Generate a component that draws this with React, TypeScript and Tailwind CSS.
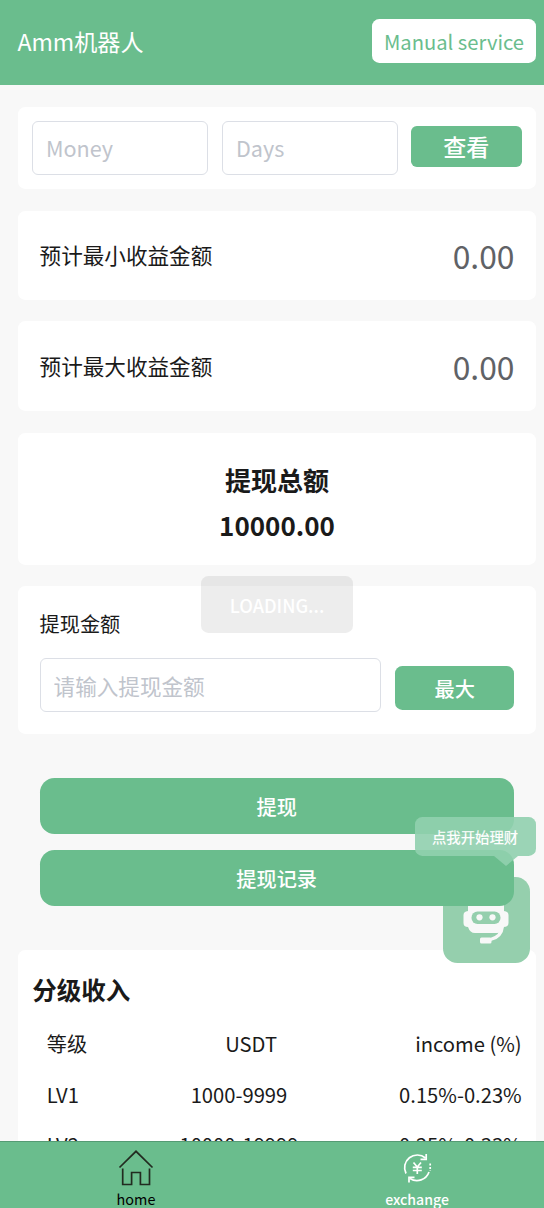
import React from 'react';

const levels = [
  { level: 'LV1', range: '1000-9999', income: '0.15%-0.23%' },
  { level: 'LV2', range: '10000-19999', income: '0.25%-0.33%' },
];

const estimates = [
  { label: '预计最小收益金额', value: '0.00' },
  { label: '预计最大收益金额', value: '0.00' },
];

function RobotIcon() {
  return (
    <svg width="86" height="86" viewBox="0 0 86 86" fill="none">
      <path d="M25 34V29Q25 22 32 22H54Q61 22 61 29V34Q65.500 34.500 65.500 38V46Q65.500 50 60.500 50Q59 56 54 56H32Q27 56 25 50Q20.500 50 20.500 46V38Q20.500 34.500 25 34Z" fill="#f8f8f8" />
      <rect x="28.500" y="34.500" width="29" height="12.500" rx="6" fill="#95cfad" />
      <circle cx="36.500" cy="40.300" r="3.100" fill="#f8f8f8" />
      <circle cx="49.500" cy="40.300" r="3.100" fill="#f8f8f8" />
      <path d="M59.500 49Q58.500 60 47.500 62.500" stroke="#f8f8f8" strokeWidth="3.200" />
      <rect x="37" y="60.500" width="11.500" height="6" rx="1.500" fill="#f8f8f8" />
    </svg>
  );
}

function HomeIcon() {
  return (
    <svg className="shrink-0" width="36" height="36" viewBox="0 0 36 36" fill="none" stroke="#222b20" strokeWidth="1.700">
      <path d="M1.500 17.500L18 1.300L34.500 17.500" />
      <path d="M4.700 18.500V34.500H13.600V22.500H22.400V34.500H31.500V18.500" />
    </svg>
  );
}

function ExchangeIcon() {
  return (
    <svg className="shrink-0" width="30" height="30" viewBox="0 0 30 30" fill="none" stroke="#fff" strokeWidth="1.700">
      <path d="M4 20.500A12.700 12.700 0 0 1 23.500 5" />
      <path d="M24.200 1V6.300H18.500" />
      <path d="M27 19A12.700 12.700 0 0 1 8 25.500" />
      <path d="M7 29.500V24.300H12.500" />
      <path d="M28.200 10.500V18" strokeDasharray="2 1.500" />
      <path d="M11.500 9.500L15.300 14L19 9.500M15.300 14V21M10.800 14.300H19.800M10.800 17.500H19.800" />
    </svg>
  );
}

export default function App() {
  return (
    <div className="relative flex h-[1208px] w-[544px] flex-col overflow-hidden bg-[#f8f8f8] font-['Noto_Sans_CJK_SC',sans-serif] text-[#1a1a1a]">
      <header className="flex h-[85.3px] shrink-0 items-center justify-between bg-[#6abd8d] pl-[17.4px] pr-[7.8px]">
        <h1 className="mb-[2px] text-[23.100px] text-white">Amm机器人</h1>
        <button className="mb-[3px] h-[44.300px] w-[164.500px] rounded-[7.300px] bg-white pt-[2px] text-[20.200px] text-[#6abd8d]">Manual service</button>
      </header>

      <main className="flex flex-col pt-[21.400px] pl-[17.800px] pr-[7.800px]">
        <section className="flex h-[82.500px] items-start rounded-[7.300px] bg-white pl-[14.700px] pt-[14.500px]">
          <input placeholder="Money" className="h-[53.500px] w-[176px] rounded-[6px] border border-[#dcdfe6] bg-white px-[12.500px] text-[21.600px] placeholder:text-[#c0c4cc]" />
          <input placeholder="Days" className="ml-[14px] h-[53.500px] w-[176px] rounded-[6px] border border-[#dcdfe6] bg-white px-[12.500px] text-[21.600px] placeholder:text-[#c0c4cc]" />
          <button className="ml-[12.500px] mt-[5px] h-[40.600px] w-[111.500px] rounded-[5.800px] bg-[#6abd8d] pr-[1px] text-[23.100px] font-medium text-white">查看</button>
        </section>

        {estimates.map(item => (
          <section key={item.label} className="mt-[21.500px] flex h-[89.300px] items-center justify-between rounded-[7.300px] bg-white px-[21.760px]">
            <span className="text-[21.600px]">{item.label}</span>
            <span className="pt-[2px] text-[31.800px] text-[#606266]">{item.value}</span>
          </section>
        ))}

        <section className="mt-[21.760px] flex h-[132.300px] flex-col items-center rounded-[7.300px] bg-white pt-[24.200px] font-bold">
          <h2 className="text-[26px] leading-[45px]">提现总额</h2>
          <p className="text-[26px] leading-[45px]">10000.00</p>
        </section>

        <section className="mt-[21.500px] h-[147.500px] rounded-[7.300px] bg-white px-[21.760px] pt-[22px]">
          <p className="text-[20.200px] leading-[31px]">提现金额</p>
          <div className="mt-[19px] flex items-center">
            <input placeholder="请输入提现金额" className="h-[54px] w-[342px] rounded-[6px] border border-[#dcdfe6] bg-white px-[13px] text-[21.600px] placeholder:text-[#c0c4cc]" />
            <button className="ml-[14px] mt-[5px] h-[44.500px] w-[119.500px] rounded-[7.300px] bg-[#6abd8d] pt-[2px] text-[20.200px] font-medium text-white">最大</button>
          </div>
        </section>

        <div className="mt-[44.300px] flex flex-col gap-[16px] pl-[22px] pr-[22.700px]">
          <button className="h-[56px] rounded-[14.500px] bg-[#6abd8d] pt-[2px] text-[20.200px] font-medium text-white">提现</button>
          <button className="relative z-10 h-[56px] rounded-[14.500px] bg-[#6abd8d] pt-[2px] text-[20.200px] font-medium text-white">提现记录</button>
        </div>

        <section className="mt-[43.800px] h-[300px] rounded-[7.300px] bg-white pl-[14.500px] pr-[14.500px] pt-[22px]">
          <h2 className="text-[24.500px] font-bold leading-[36px]">分级收入</h2>
          <div className="mt-[11px] flex h-[50.600px] items-center justify-between pl-[14.500px] text-[20.200px]">
            <span>等级</span>
            <span>USDT</span>
            <span>income (%)</span>
          </div>
          {levels.map(row => (
            <div key={row.level} className="flex h-[50.600px] items-center justify-between pl-[14.500px] text-[20.200px]">
              <span>{row.level}</span>
              <span>{row.range}</span>
              <span>{row.income}</span>
            </div>
          ))}
        </section>
      </main>

      {/* floating helper, tucked under the records button */}
      <div className="absolute left-[443.400px] top-[876.500px] h-[86px] w-[86.500px] overflow-hidden rounded-[14.500px] bg-[#95cfad]">
        <RobotIcon />
      </div>
      <div className="absolute left-[414.600px] top-[817px] z-20 opacity-90">
        <div className="flex h-[39px] w-[121px] items-center justify-center rounded-[7.300px] bg-[#91d1af] text-[14.400px] font-medium text-white">点我开始理财</div>
        <svg className="ml-[79px] block" width="24" height="10" viewBox="0 0 24 10">
          <path d="M0 0H24L12 10Z" fill="#91d1af" />
        </svg>
      </div>

      <div className="absolute left-[201px] top-[576px] z-20 flex h-[57px] w-[152px] items-center justify-center rounded-[7.300px] bg-black/7 pt-[2px] text-[18.100px] font-medium text-white">LOADING...</div>

      <nav className="absolute bottom-0 left-0 z-30 flex h-[67.500px] w-full border-t border-[#559b74] bg-[#6abd8d] text-[14.400px]">
        <div className="flex w-1/2 flex-col items-center pt-[8.500px]">
          <HomeIcon />
          <span className="mt-[5px] shrink-0 leading-[16px] text-black">home</span>
        </div>
        <div className="flex w-1/2 flex-col items-center pl-[18px] pt-[11px]">
          <ExchangeIcon />
          <span className="mt-[8.500px] shrink-0 text-[14.100px] leading-[16px] font-medium text-white">exchange</span>
        </div>
      </nav>
    </div>
  );
}
